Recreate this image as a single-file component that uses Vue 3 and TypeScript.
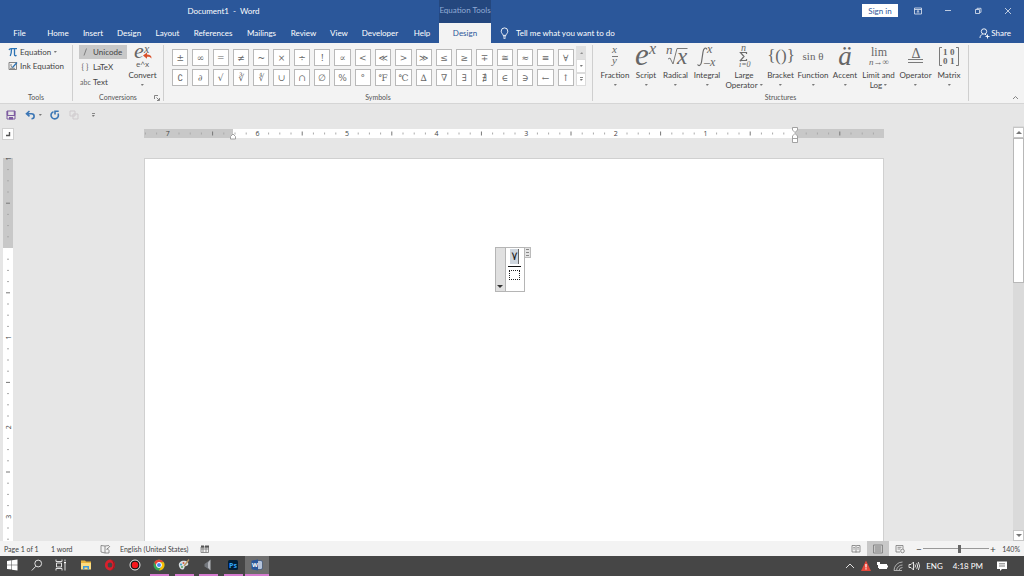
<script setup lang="ts">
interface Tick { pos: number; tall: boolean }
interface Mark { pos: number; label: string }

const tabs: string[] = ['File', 'Home', 'Insert', 'Design', 'Layout', 'References', 'Mailings', 'Review', 'View', 'Developer', 'Help']
const symbols: string[] = [
  '±', '∞', '=', '≠', '~', '×', '÷', '!', '∝', '<', '≪', '>', '≫', '≤', '≥', '∓', '≅', '≈', '≡', '∀',
  '∁', '∂', '√', '∛', '∜', '∪', '∩', '∅', '%', '°', '℉', '℃', '∆', '∇', '∃', '∄', '∈', '∋', '←', '↑',
]
const structures: { id: string; label: string; second?: string }[] = [
  { id: 'fraction', label: 'Fraction' },
  { id: 'script', label: 'Script' },
  { id: 'radical', label: 'Radical' },
  { id: 'integral', label: 'Integral' },
  { id: 'large', label: 'Large', second: 'Operator' },
  { id: 'bracket', label: 'Bracket' },
  { id: 'function', label: 'Function' },
  { id: 'accent', label: 'Accent' },
  { id: 'limit', label: 'Limit and', second: 'Log' },
  { id: 'operator', label: 'Operator' },
  { id: 'matrix', label: 'Matrix' },
]

const inch = 89.6
function scale(origin: number, from: number, to: number): { ticks: Tick[]; marks: Mark[] } {
  const ticks: Tick[] = []
  const marks: Mark[] = []
  for (let k = from; k <= to; k++) {
    if (k === 0) continue
    const pos = origin + (k * inch) / 8
    if (k % 8 === 0) marks.push({ pos, label: String(Math.abs(k / 8)) })
    else ticks.push({ pos, tall: k % 4 === 0 })
  }
  return { ticks, marks }
}
const across = scale(651, -58, 7)
const down = scale(90, -8, 31)
</script>

<template>
  <div class="app">
    <header class="top">
      <div class="titlebar">
        <h1 class="title">Document1&nbsp; -&nbsp; Word</h1>
        <div class="context">Equation Tools</div>
        <div class="window">
          <button class="signin">Sign in</button>
          <button class="win" aria-label="Ribbon display options">
            <svg width="8" height="8" viewBox="0 0 8 8"><path d="M.5 1h7v6h-7zM.5 2.5h7M4 6.3V3.6M2.7 4.8L4 3.6l1.3 1.2" /></svg>
          </button>
          <button class="win" aria-label="Minimize"><svg width="8" height="8" viewBox="0 0 8 8"><path d="M1 3.5h6" /></svg></button>
          <button class="win" aria-label="Restore"><svg width="8" height="8" viewBox="0 0 8 8"><path d="M1.5 2.5h4v4h-4zM3 2.5V1.3h4V5.3H5.7" /></svg></button>
          <button class="win" aria-label="Close"><svg width="8" height="8" viewBox="0 0 8 8"><path d="M1 1l6 6M7 1L1 7" /></svg></button>
        </div>
      </div>
      <nav class="tabs">
        <button v-for="t in tabs" :key="t" class="tab">{{ t }}</button>
        <button class="tab active">Design</button>
        <button class="tell">
          <svg width="9" height="12" viewBox="0 0 9 12"><path d="M3 8.4C3 7 1.2 6.300 1.200 4.200a3.300 3.300 0 0 1 6.600 0C7.800 6.300 6 7 6 8.400zM3 9.900h3M3.500 11.300h2" /></svg>
          Tell me what you want to do
        </button>
        <button class="share">
          <svg width="11" height="11" viewBox="0 0 11 11"><circle cx="5" cy="3.500" r="2.700" /><path d="M1 10c0-2 1-3 2.700-4M6 6l1.500 1.500M8.500 6.500v4M6.500 8.500h4" /></svg>
          Share
        </button>
      </nav>
    </header>

    <section class="ribbon">
      <div class="group tools">
        <div class="body col">
          <button class="small">
            <svg width="10" height="10" viewBox="0 0 10 10"><path class="pi" d="M1 3C1.500 1.800 2 1.700 3 1.700h6M3.500 2C3.500 5 3.200 7 2.200 9M6.500 2v5.500c0 1.300 1 1.600 2 .8" /></svg>
            <span>Equation</span><i class="caret"></i>
          </button>
          <button class="small">
            <svg width="10" height="10" viewBox="0 0 10 10"><path class="gray" d="M1 1.500h7.500v7H1zM3 5l1.500 2" /><path class="blue" d="M4.500 6.500L9 1.500" /><path class="gray" d="M2 4h2M2 7.300h5" /></svg>
            <span>Ink Equation</span>
          </button>
        </div>
        <div class="caption">Tools</div>
      </div>

      <div class="group conv">
        <div class="body">
          <div class="modes">
            <button class="small on"><svg width="10" height="10" viewBox="0 0 10 10"><path class="gray" d="M6.500 1.500L4 8.500" /></svg><span>Unicode</span></button>
            <button class="small"><span class="glyph">{ }</span><span>LaTeX</span></button>
            <button class="small"><span class="glyph abc">abc</span><span>Text</span></button>
          </div>
          <button class="big">
            <svg width="24" height="24" viewBox="0 0 24 24">
              <text class="mi" x="3" y="13" font-size="22">e</text><text class="mi" x="13" y="8" font-size="12">x</text>
              <path class="arrow" d="M12 10.500l4-3v2c3 0 4.500 1 4.500 4-1.200-1.500-2.500-1.800-4.500-1.700v2z" />
              <text class="sans" x="5" y="22" font-size="8">e^x</text>
            </svg>
            <span>Convert</span><i class="caret"></i>
          </button>
        </div>
        <div class="caption">Conversions</div>
        <button class="launcher" aria-label="Conversions options"><svg width="6" height="6" viewBox="0 0 6 6"><path d="M.5 4V.5H4M2.500 2.500l2.500 2.500M5.500 3v2.500H3" /></svg></button>
      </div>

      <div class="group syms">
        <div class="body">
          <div class="grid"><button v-for="s in symbols" :key="s" class="sym">{{ s }}</button></div>
          <div class="scroller">
            <button class="off" aria-label="Previous row"><i class="caret up"></i></button>
            <button aria-label="Next row"><i class="caret"></i></button>
            <button aria-label="More symbols"><i class="bar"></i><i class="caret"></i></button>
          </div>
        </div>
        <div class="caption">Symbols</div>
      </div>

      <div class="group structs">
        <div class="body structgrid">
          <button v-for="s in structures" :key="s.id" class="big">
            <svg width="28" height="24" viewBox="0 0 28 24">
              <g v-if="s.id === 'fraction'"><text class="mi" x="11" y="8" font-size="11">x</text><path class="line" d="M11 11.500h6" /><text class="mi" x="11" y="19" font-size="11">y</text></g>
              <g v-else-if="s.id === 'script'"><text class="mi" x="3" y="20" font-size="31">e</text><text class="mi" x="17" y="9" font-size="16">x</text></g>
              <g v-else-if="s.id === 'radical'"><text class="mi" x="4" y="9" font-size="13">n</text><path class="line" d="M6 14l2-1 3 6 4-15.500H25.500" /><text class="mi" x="15" y="19" font-size="23">x</text></g>
              <g v-else-if="s.id === 'integral'"><path class="line thick" d="M14 4.500C13 2 10.500 3 10 7L8.500 17c-.5 3.500-2.500 4.500-4 2.500" /><text class="mi" x="14" y="8" font-size="12">x</text><text class="mi" x="11" y="21" font-size="12">–x</text></g>
              <g v-else-if="s.id === 'large'"><text class="mi" x="11" y="6" font-size="10">n</text><path class="line thick" d="M16.500 9V7.500h-6l3.500 4-3.500 4h6V14" /><text class="mi" x="9" y="22" font-size="8">i=0</text></g>
              <text v-else-if="s.id === 'bracket'" class="mr" x="14" y="16" font-size="17" text-anchor="middle">{()}</text>
              <text v-else-if="s.id === 'function'" class="mr" x="14" y="15" font-size="11" text-anchor="middle">sin θ</text>
              <text v-else-if="s.id === 'accent'" class="mi" x="14" y="20" font-size="27" text-anchor="middle">ä</text>
              <g v-else-if="s.id === 'limit'"><text class="mr" x="14" y="11" font-size="12" text-anchor="middle">lim</text><text class="mi" x="14" y="20" font-size="9" text-anchor="middle">n→∞</text></g>
              <g v-else-if="s.id === 'operator'"><text class="mr" x="14" y="13" font-size="14" text-anchor="middle">Δ</text><path class="line" d="M6 14.500h15M6 17.500h15" /></g>
              <g v-else><path class="line" d="M7 2.500H4.500v18H7M21 2.500h2.500v18H21" /><text class="mb" x="8" y="10" font-size="9">1</text><text class="mb" x="15" y="10" font-size="9">0</text><text class="mb" x="8" y="19" font-size="9">0</text><text class="mb" x="15" y="19" font-size="9">1</text></g>
            </svg>
            <span>{{ s.label }}</span>
            <span v-if="s.second" class="second">{{ s.second }}<i class="caret"></i></span>
            <i v-else class="caret"></i>
          </button>
        </div>
        <div class="caption">Structures</div>
      </div>
      <button class="collapse" aria-label="Collapse the ribbon"><svg width="7" height="5" viewBox="0 0 7 5"><path d="M1 4l2.500-2.500L6 4" /></svg></button>
    </section>

    <div class="quick">
      <button aria-label="Save"><svg width="10" height="10" viewBox="0 0 10 10"><path class="save" d="M1 1h8v8H1zM1 5.500h8" /><path class="savefill" d="M3 7h4v2.500H3zM.8 1h1.400v4H.8zM7.800 1h1.400v4H7.800z" /></svg></button>
      <button aria-label="Undo" class="undo"><svg width="11" height="10" viewBox="0 0 11 10"><path class="bluethick" d="M4.500 1L1.500 3.700l3 2.700M2 3.700h4.500c3.500 0 3.500 5 0 5" /></svg><i class="caret"></i></button>
      <button aria-label="Repeat"><svg width="10" height="10" viewBox="0 0 10 10"><path class="bluethick" d="M3.500 1.700A3.700 3.700 0 1 0 8 3.500M5 4.500V1.300h3.700" /></svg></button>
      <button aria-label="Copy" class="faded"><svg width="10" height="10" viewBox="0 0 10 10"><path d="M1 1h5v5H1zM4 4h5v5H4z" /></svg></button>
      <button aria-label="Customize toolbar" class="custom"><i class="bar"></i><i class="caret"></i></button>
    </div>

    <main class="work">
      <div class="left">
        <button class="tabstop" aria-label="Tab stop"><svg width="6" height="6" viewBox="0 0 6 6"><path d="M1 4.500h3.500V1" /></svg></button>
        <svg class="vruler" width="10" height="640" viewBox="0 0 10 640">
          <rect class="inside" width="10" height="640" /><rect class="outside" width="10" height="90" />
          <path v-for="t in down.ticks" :key="t.pos" class="tick" :class="{ tall: t.tall }" :d="`M${t.tall ? 3 : 4} ${t.pos}H${t.tall ? 7 : 6}`" />
          <text v-for="m in down.marks" :key="m.pos" class="num" :transform="`translate(7.500 ${m.pos}) rotate(-90)`">{{ m.label }}</text>
        </svg>
      </div>
      <div class="canvas">
        <svg class="hruler" viewBox="0 0 740 16">
          <rect class="outside" y="2" width="740" height="9" /><rect class="inside" x="89" y="2" width="562" height="9" />
          <path v-for="t in across.ticks" :key="t.pos" class="tick" :class="{ tall: t.tall }" :d="`M${t.pos} ${t.tall ? 4.500 : 5.500}V${t.tall ? 8.500 : 7.500}`" />
          <text v-for="m in across.marks" :key="m.pos" class="num" :x="m.pos" y="9">{{ m.label }}</text>
          <path class="indent" d="M86.500 12V9.500L89 7l2.500 2.500V12z" />
          <path class="indent" d="M648.500 .5h5v2.500L651 5.500 648.500 3zM648.500 12V9L651 6.500 653.500 9v6.500h-5zM648.500 11.500h5" />
        </svg>
        <article class="page">
          <div class="equation">
            <button class="handle" aria-label="Equation options"><i class="caret"></i></button>
            <div class="fraction"><span class="numer">٧</span><span class="denom"></span></div>
            <span class="grip"><svg width="5" height="9" viewBox="0 0 5 9"><path d="M1 1.500h3M1 4.500h3M1 7.500h3" /></svg></span>
          </div>
        </article>
      </div>
      <div class="scrollbar">
        <button aria-label="Scroll up"><i class="caret up"></i></button>
        <div class="thumb"></div>
        <button class="end" aria-label="Scroll down"><i class="caret"></i></button>
      </div>
    </main>

    <footer class="status">
      <span class="pages">Page 1 of 1</span><span class="words">1 word</span>
      <svg class="proof" width="11" height="10" viewBox="0 0 11 10"><path d="M5 2v7L1 8V1.500zM5 2l4-.500M5 9h4V6M6.500 6l3.500-4M7 4l1.500 2" /></svg>
      <span class="lang">English (United States)</span>
      <svg width="10" height="10" viewBox="0 0 10 10"><path d="M1 3h7.500v5.500H1zM1 5h7.500M3 3v5.500M6 3v5.500" /><path class="dark" d="M1 1.500h3v2H1zM5 1.500h4v2H5z" /></svg>
      <div class="views">
        <button aria-label="Read mode"><svg width="10" height="10" viewBox="0 0 10 10"><path d="M1 1.500h3.500l.5.500.500-.500H9v6.500H1zM5 2v6.500M2.300 3.500h1.500M2.300 5h1.500M6.300 3.500h1.500M6.300 5h1.500" /></svg></button>
        <button class="on" aria-label="Print layout"><svg width="10" height="10" viewBox="0 0 10 10"><path d="M.5 1h9v8h-9zM2 3h6M2 5h6M2 7h6" /></svg></button>
        <button aria-label="Web layout"><svg width="10" height="10" viewBox="0 0 10 10"><path d="M5 8H1V1.500h7V5M2.500 3.300h4M2.500 5h3" /><circle cx="7.500" cy="7" r="1.800" /></svg></button>
      </div>
      <label class="zoom"><span class="sign">−</span><input type="range" min="10" max="240" value="136" aria-label="Zoom"><span class="sign">+</span><span class="pct">140%</span></label>
    </footer>

    <div class="taskbar">
      <button class="task" aria-label="Start"><svg width="14" height="14" viewBox="0 0 14 14"><path fill="#fff" d="M2 3l4.500-.7v4.400H2zM7 2.200L12.500 1.400v5.300H7zM2 7.200h4.500v4.400L2 11zM7 7.200h5.500v5.400L7 11.800z" /></svg></button>
      <button class="task" aria-label="Search"><svg width="14" height="14" viewBox="0 0 14 14"><path class="w" d="M5.800 8.300L1.800 12.500" /><circle class="w" cx="8.200" cy="5.500" r="3.400" /></svg></button>
      <button class="task" aria-label="Task view"><svg width="14" height="14" viewBox="0 0 14 14"><path class="w" d="M2 1.500v2h6v-2M2.500 5h5v4h-5zM2 12.500v-2h6v2M11 1.500v2M11 6v6.500" /><path fill="#fff" d="M10 4h2v1.500h-2z" /></svg></button>
      <button class="task" aria-label="File Explorer"><svg width="14" height="14" viewBox="0 0 14 14"><path fill="#e8b33c" d="M2 2.500h4l1 1h5V8H2z" /><path fill="#fbdc81" d="M2 5h10v6.500H2z" /><path fill="#3f9bdc" d="M4 8h6v3.500H8.500v-2h-3v2H4z" /></svg></button>
      <button class="task" aria-label="Opera"><svg width="14" height="14" viewBox="0 0 14 14"><ellipse cx="7" cy="7" rx="3.700" ry="4" fill="none" stroke="#d9202c" stroke-width="2.800" /><path fill="#8e1720" d="M8 2c2 1 2.700 3 2.700 5S10 11 8 12c5 0 5-10 0-10z" /></svg></button>
      <button class="task" aria-label="Recorder"><svg width="14" height="14" viewBox="0 0 14 14"><circle cx="7" cy="7" r="5" fill="#141414" stroke="#e8e8e8" /><circle cx="7" cy="7" r="3.200" fill="#f5161c" /></svg></button>
      <button class="task open" aria-label="Chrome"><svg width="14" height="14" viewBox="0 0 14 14"><circle cx="7" cy="7" r="5.500" fill="#34a853" /><path fill="#ea4335" d="M2.200 4.300A5.500 5.500 0 0 1 11.800 4.300H7L4.700 8.500z" /><path fill="#fbbc05" d="M11.800 4.300A5.500 5.500 0 0 1 7 12.500L9.400 8.300 7 4.300z" /><circle cx="7" cy="7" r="2.500" fill="#4285f4" stroke="#fff" /></svg></button>
      <button class="task open" aria-label="Paint"><svg width="14" height="14" viewBox="0 0 14 14"><path fill="#d9dfe2" d="M2 8C1 4 5 2 9 3c3 1 3 5 0 5-2 0-1 3-3 3.500S2.500 10 2 8z" /><circle cx="4" cy="6.500" r="1" fill="#3b9fc9" /><circle cx="6.500" cy="5" r="1" fill="#d65a3f" /><circle cx="5" cy="9" r="1" fill="#5aa155" /><path stroke="#b99562" stroke-width="1.300" d="M7 8l5-6.500" /></svg></button>
      <button class="task open" aria-label="Media"><svg width="14" height="14" viewBox="0 0 14 14"><path fill="#74787e" d="M3.500 6L9 2v10L3.500 8.500z" /><path fill="#b4b7bc" d="M7 4.500L9.500 1.500v11L7 9.500z" /></svg></button>
      <button class="task open" aria-label="Photoshop"><svg width="14" height="14" viewBox="0 0 14 14"><rect x="2" y="2" width="10" height="10" rx="1.500" fill="#001e36" /><text x="7" y="9.500" font-size="7" text-anchor="middle" fill="#31a8ff" class="sansb">Ps</text></svg></button>
      <button class="task open current" aria-label="Word"><svg width="14" height="14" viewBox="0 0 14 14"><path fill="#fff" stroke="#2b579a" stroke-width=".7" d="M7 3h5v8H7z" /><path stroke="#2b579a" stroke-width=".7" d="M8 5h3M8 7h3M8 9h3" /><path fill="#2b579a" d="M1.500 2.700L8 1.500v11L1.500 11.300z" /><text x="4.800" y="9.300" font-size="6" text-anchor="middle" fill="#fff" class="sansb">W</text></svg></button>
      <div class="tray">
        <svg width="10" height="12" viewBox="0 0 10 12"><path class="w" d="M1 8l4-4 4 4" /></svg>
        <svg width="10" height="12" viewBox="0 0 10 12"><path fill="#e5483b" d="M5 .5l5 10.500H0z" /><path stroke="#fff" stroke-width="1.200" d="M5 4v3.500M5 8.300v1.200" /></svg>
        <svg width="12" height="12" viewBox="0 0 12 12"><path fill="#fff" d="M3 4h8v5H3zM11 5.500h1v2h-1zM1 2h3v3H1zM2 5h1v3H2z" /></svg>
        <svg width="10" height="12" viewBox="0 0 10 12"><path class="w dim" d="M1 10.500A8.500 8.500 0 0 1 9.500 2M3.500 10.500a6 6 0 0 1 6-5.500M6 10.500A3.500 3.500 0 0 1 9.500 7.500M1 10.500h8" /></svg>
        <svg width="12" height="12" viewBox="0 0 12 12"><path class="w" d="M1 4.500h2l2.500-2.500v8L3 7.500H1zM7 4.500q1 1.500 0 3M8.700 3.200q2 2.800 0 5.600M10.300 2q2.500 4 0 8" /></svg>
        <span class="eng">ENG</span><time>4:18 PM</time>
        <svg class="note" width="12" height="12" viewBox="0 0 12 12"><path fill="#fff" d="M1 1.500h10v7.500H6L4 11V9H1z" /><path stroke="#555" stroke-width=".8" d="M3 3.800h6M3 6h6" /></svg>
      </div>
    </div>
  </div>
</template>

<style>
html, body { height: 100%; }
body { margin: 0; }
</style>

<style scoped>
.app { height: 100vh; display: flex; flex-direction: column; overflow: hidden; background: #e6e6e6; color: #444; font: 8px/10px Lato, "Open Sans", sans-serif; }
button { font: inherit; color: inherit; background: none; border: 0; padding: 0; margin: 0; display: flex; align-items: center; white-space: nowrap; }
svg { display: block; flex: none; fill: none; overflow: visible; }
.caret { display: block; flex: none; width: 0; height: 0; border: 2px solid transparent; border-top-color: #777; border-bottom: 0; border-left-width: 1px; border-right-width: 2px; }
.caret.up { transform: rotate(180deg); }
.bar { display: block; width: 3px; height: 1px; background: #888; margin-bottom: 1px; }

.top { background: #2b579a; color: #fff; flex: none; }
.titlebar { display: grid; grid-template-columns: 439px 52px 1fr; height: 23px; align-items: center; }
.title { margin: 0; padding: 0 0 2px 8px; font-size: 8px; font-weight: 400; text-align: center; }
.context { height: 23px; line-height: 21px; background: #24477e; color: #92acd6; text-align: center; white-space: nowrap; }
.window { display: flex; justify-content: flex-end; align-items: center; padding: 0 12px 2px 0; }
.window svg { stroke: #e3e9f3; stroke-width: .8; }
.signin { background: #fff; color: #2b579a; height: 13px; width: 36px; justify-content: center; margin-right: 16px; }
.win + .win { margin-left: 22px; }
.tabs { display: flex; height: 20px; align-items: stretch; padding-left: 6px; }
.tab { padding: 0 7px; justify-content: center; }
.tab:nth-child(1) { width: 27px; margin-right: 7px; }
.tab:nth-child(2) { width: 36px; }
.tab:nth-child(3) { width: 34px; }
.tab:nth-child(4) { width: 38px; }
.tab:nth-child(5) { width: 39px; }
.tab:nth-child(6) { width: 52px; }
.tab:nth-child(7) { width: 45px; }
.tab:nth-child(8) { width: 39px; }
.tab:nth-child(9) { width: 32px; }
.tab:nth-child(10) { width: 50px; }
.tab:nth-child(11) { width: 34px; }
.tab.active { width: 52px; background: #f3f3f3; color: #2b579a; }
.tell { margin-left: 9px; gap: 7px; }
.tell svg, .share svg { stroke: #fff; stroke-width: .9; }
.share { margin-left: auto; margin-right: 13px; gap: 1px; }

.ribbon { display: flex; height: 60px; flex: none; background: #f3f3f3; border-bottom: 1px solid #d5d5d5; }
.group { position: relative; display: flex; flex-direction: column; justify-content: space-between; box-sizing: border-box; margin: 2px 0; border-right: 1px solid #cfcfcf; }
.body { display: flex; }
.col { flex-direction: column; }
.caption { text-align: center; font-size: 7px; line-height: 10px; margin-bottom: -1px; color: #555; }
.tools { width: 73px; }
.conv { width: 91px; }
.syms { width: 429px; }
.structs { width: 376px; }
.small { height: 14px; gap: 2px; }
.tools .small { padding-left: 8px; }
.small .caret { margin-left: 1px; }
.pi { stroke: #2b73b5; stroke-width: 1.3; }
.gray { stroke: #777; stroke-width: .9; }
.blue { stroke: #2b73b5; stroke-width: 1.2; }
.modes { display: flex; flex-direction: column; padding-left: 6px; gap: 1px; }
.modes .small { width: 48px; box-sizing: border-box; gap: 3px; padding-left: 1px; }
.on { background: #c8c8c8; }
.glyph { width: 10px; color: #666; text-align: center; }
.abc { font-size: 7px; }
.big { flex-direction: column; line-height: 10px; }
.big svg { margin-bottom: 1px; }
.big > .caret { margin-top: 4px; }
.conv .big { width: 31px; }
.second { display: flex; align-items: center; gap: 2px; }
.mi, .mr, .mb { font-family: "Liberation Serif", serif; fill: #666; }
.mi { font-style: italic; }
.mb { font-weight: 700; }
.sans { font-family: "Open Sans", sans-serif; fill: #555; }
.sansb { font-family: "Open Sans", sans-serif; font-weight: 700; }
.arrow { fill: #d9502b; }
.line { stroke: #6c6c6c; stroke-width: .9; }
.thick { stroke-width: 1.2; }
.launcher { position: absolute; right: 3px; bottom: 0; }
.launcher svg, .collapse svg { stroke: #777; stroke-width: .9; }
.syms .body { padding: 1px 6px 0 8px; gap: 2px; }
.grid { flex: 1; display: grid; grid-template-columns: repeat(20, 1fr); grid-auto-rows: 17px; gap: 3px 4px; padding-top: 3px; }
.sym { justify-content: center; background: #fff; border: 1px solid #b9b9b9; font: 9px/12px "DejaVu Serif", "DejaVu Sans", serif; color: #666; }
.scroller { width: 10px; display: flex; flex-direction: column; }
.scroller button { flex: 1; flex-direction: column; justify-content: center; background: #fff; border: 1px solid #dcdcdc; }
.scroller .off { background: #dcdcdc; opacity: .8; }
.structgrid { display: grid; grid-template-columns: 34px 28px 31px 32px 42px 31px 34px 30px 37px 37px 30px; padding-left: 5px; }
.collapse { margin: auto 5px 3px auto; }

.quick { height: 22px; flex: none; display: flex; align-items: center; padding-left: 6px; }
.quick button { margin-right: 14px; }
.quick button:first-child { margin-right: 9px; }
.quick .undo { gap: 3px; margin-right: 8px; }
.quick .faded { margin-right: 13px; margin-left: -5px; }
.quick .faded svg { stroke: #cfcacd; }
.custom { flex-direction: column; }
.save { stroke: #7d5ba0; }
.savefill { fill: #7d5ba0; }
.bluethick { stroke: #3b76b5; stroke-width: 1.6; }

.work { flex: 1; min-height: 0; display: grid; grid-template-columns: 15px 1fr 11px; overflow: hidden; }
.left { padding: 2px 0 0 2px; overflow: hidden; min-height: 0; }
.tabstop { width: 12px; height: 12px; background: #fff; border: 1px solid #d0d0d0; justify-content: center; margin-bottom: 18px; }
.tabstop svg { stroke: #555; stroke-width: 1.4; }
.vruler { margin-left: 1px; }
.inside { fill: #fff; }
.outside { fill: #c8c8c8; }
.tick { stroke: #aaa; stroke-width: 1; }
.tick.tall { stroke: #777; }
.num { font: 7px "Open Sans", sans-serif; fill: #444; text-anchor: middle; }
.canvas { display: flex; flex-direction: column; align-items: center; min-height: 0; }
.hruler { width: 74.15%; flex: none; margin: 1px 0 15px; }
.indent { fill: #fff; stroke: #999; stroke-width: .9; }
.page { flex: 1; width: 74.15%; box-sizing: border-box; background: #fff; border: 1px solid #d0d0d0; border-bottom: 0; padding-top: 88px; display: flex; justify-content: center; align-items: flex-start; }
.equation { display: flex; align-items: flex-start; padding-right: 2px; }
.handle { width: 11px; height: 45px; box-sizing: border-box; background: #e0e0e0; border: 1px solid #b5b5b5; align-items: flex-end; justify-content: center; padding-bottom: 3px; }
.handle .caret { border-top-color: #333; border-width: 3px 3px 0; }
.fraction { width: 19px; height: 45px; box-sizing: border-box; border: 1px solid #b5b5b5; border-left: 0; display: flex; flex-direction: column; align-items: center; padding-top: 1px; }
.numer { width: 8px; height: 15px; background: #cfd6de; border-right: 1px solid #666; font: 12px/15px "DejaVu Sans", sans-serif; color: #222; text-align: center; margin-bottom: 2px; }
.denom { width: 13px; border-top: 1px solid #111; padding-top: 3px; }
.denom::after { content: ""; display: block; width: 9px; height: 8px; margin: 0 auto; border: 1px dotted #222; }
.grip { border: 1px solid #bbb; border-left: 0; background: #e4e4e4; }
.grip svg { stroke: #888; }
.scrollbar { display: flex; flex-direction: column; background: #dadada; padding-top: 1px; min-height: 0; }
.scrollbar button { height: 11px; flex: none; box-sizing: border-box; background: #fff; border: 1px solid #c6c6c6; justify-content: center; }
.scrollbar .caret { border-width: 3px 3px 0; }
.scrollbar .thumb { height: 35%; box-sizing: border-box; background: #fff; border: 1px solid #b8b8b8; }
.scrollbar .end { margin-top: auto; }

.status { height: 15px; flex: none; display: flex; align-items: center; background: #f3f3f3; font-size: 7px; padding: 0 4px; white-space: nowrap; }
.status svg { stroke: #777; stroke-width: .8; }
.status .dark { fill: #555; stroke: none; }
.pages { width: 47px; }
.words { width: 49px; }
.proof { margin-right: 9px; }
.lang { width: 80px; }
.views { margin-left: auto; display: flex; align-self: stretch; }
.views button { width: 22px; justify-content: center; }
.zoom { display: flex; align-items: center; margin-left: 4px; }
.sign { font-size: 10px; width: 8px; text-align: center; }
.zoom input { appearance: none; width: 66px; height: 10px; margin: 0; background: linear-gradient(#999, #999) center / 100% 1px no-repeat; }
.zoom input::-webkit-slider-thumb { appearance: none; width: 3px; height: 8px; background: #666; }
.pct { width: 23px; text-align: right; }

.taskbar { height: 20px; flex: none; display: flex; background: #464646; color: #fff; }
.task { width: 24px; margin-right: 1px; box-sizing: border-box; justify-content: center; border-bottom: 2px solid transparent; }
.task:nth-child(2n) { margin-right: 0; }
.task.open { background: linear-gradient(#d67bd0, #d67bd0) bottom / 19px 2px no-repeat border-box; }
.task.current { background: #6e6e6e; border-bottom-color: #d67bd0; }
.w { stroke: #f0f0f0; stroke-width: .9; }
.dim { stroke: #bbb; }
.tray { margin-left: auto; display: flex; align-items: center; gap: 5px; padding-right: 16px; }
.tray svg:first-child { margin-right: 1px; }
.eng { margin-left: 1px; }
.tray time { margin: 0 8px 0 5px; }
</style>
